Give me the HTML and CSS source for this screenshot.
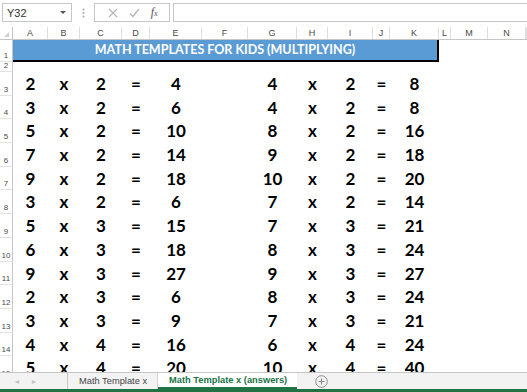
FILE: index.html
```html
<!DOCTYPE html>
<html>
	<head>
		<meta charset="utf-8">
		<link rel="stylesheet" href="styles.css">
	</head>
	<body>
		<div id="formulaBar">
			<div class="nameBox">Y32<span class="dropArrow"></span></div>
			<div class="grip">
				<svg width="3" height="10" viewBox="0 0 3 10"><circle cx="1.5" cy="1.5" r="1" fill="#a6a6a6"/><circle cx="1.5" cy="5" r="1" fill="#a6a6a6"/><circle cx="1.5" cy="8.5" r="1" fill="#a6a6a6"/></svg>
			</div>
			<div class="fxButtons">
				<svg width="10" height="10" viewBox="0 0 10 10"><path d="M1 1 L9 9 M9 1 L1 9" stroke="#b4b4b4" stroke-width="1.2" fill="none"/></svg>
				<svg width="11" height="10" viewBox="0 0 11 10"><path d="M1 5.5 L4 8.5 L10 1" stroke="#b4b4b4" stroke-width="1.3" fill="none"/></svg>
				<span class="fx">f<small>x</small></span>
			</div>
			<div class="formulaInput"></div>
		</div>

		<div id="sheet">
			<div class="row colHeaders">
				<div class="corner"><span class="cornerMark"></span></div>
				<div class="colHead">A</div>
				<div class="colHead">B</div>
				<div class="colHead">C</div>
				<div class="colHead">D</div>
				<div class="colHead">E</div>
				<div class="colHead">F</div>
				<div class="colHead">G</div>
				<div class="colHead">H</div>
				<div class="colHead">I</div>
				<div class="colHead">J</div>
				<div class="colHead">K</div>
				<div class="colHead">L</div>
				<div class="colHead">M</div>
				<div class="colHead">N</div>
				<div class="colHead"></div>
			</div>
			<div class="row titleRow">
				<div class="rowHead">1</div>
				<div class="title">MATH TEMPLATES FOR KIDS (MULTIPLYING)</div>
			</div>
			<div class="row spacerRow">
				<div class="rowHead">2</div>
			</div>
			<div id="rows"></div>
		</div>

		<div id="tabBar">
			<div class="tabNav">
				<span class="navArrow">&#9666;</span>
				<span class="navArrow">&#9656;</span>
			</div>
			<div class="tab">Math Template x</div>
			<div class="tab activeTab">Math Template x (answers)</div>
			<div class="addSheet">
				<svg width="13" height="13" viewBox="0 0 13 13"><circle cx="6.5" cy="6.5" r="5.8" stroke="#8a8a8a" stroke-width="1" fill="none"/><path d="M6.5 3.5 V9.5 M3.5 6.5 H9.5" stroke="#8a8a8a" stroke-width="1.1"/></svg>
			</div>
		</div>
		<div id="statusStrip"></div>

		<script type="text/javascript">
			// left block: a x b = c, right block: d x e = f
			var data = [
				[2,2,4, 4,2,8],
				[3,2,6, 4,2,8],
				[5,2,10, 8,2,16],
				[7,2,14, 9,2,18],
				[9,2,18, 10,2,20],
				[3,2,6, 7,2,14],
				[5,3,15, 7,3,21],
				[6,3,18, 8,3,24],
				[9,3,27, 9,3,27],
				[2,3,6, 8,3,24],
				[3,3,9, 7,3,21],
				[4,4,16, 6,4,24],
				[5,4,20, 10,4,40]
			];

			var holder = document.getElementById('rows');
			for(var i=0;i<data.length;i++){
				var d = data[i];
				var cells = [i+3, d[0], 'x', d[1], '=', d[2], '', d[3], 'x', d[4], '=', d[5], '', '', '', ''];
				var row = document.createElement('div');
				row.className = 'row dataRow';
				for(var n=0;n<cells.length;n++){
					var cell = document.createElement('div');
					cell.className = n==0 ? 'rowHead' : 'cell';
					cell.textContent = cells[n];
					row.appendChild(cell);
				}
				holder.appendChild(row);
			}
		</script>
	</body>
</html>
```

FILE: styles.css
```css
html, body{
	margin:0px;
	padding:0px;
}
body{
	width:527px;
	height:392px;
	overflow:hidden;
	background-color:#ffffff;
	font-family:"Liberation Sans", Arial, sans-serif;
	--cols:13px 35px 32px 42px 28px 52px 46px 49px 31px 45px 17px 49px 12px 37px 38px 1fr;
}

/* formula bar */
#formulaBar{
	height:27px;
	display:flex;
	align-items:flex-start;
	padding-top:3px;
	box-sizing:border-box;
}
.nameBox{
	margin-left:2px;
	width:70px;
	height:19px;
	border:solid 1px #c6c6c6;
	box-sizing:border-box;
	display:flex;
	align-items:center;
	justify-content:space-between;
	padding:0px 5px 0px 4px;
	font-size:11px;
	color:#333333;
}
.dropArrow{
	width:0px;
	height:0px;
	border-left:3px solid transparent;
	border-right:3px solid transparent;
	border-top:3px solid #555555;
}
.grip{
	width:22px;
	height:19px;
	display:flex;
	align-items:center;
	justify-content:center;
}
.fxButtons{
	width:76px;
	height:19px;
	border:solid 1px #c6c6c6;
	box-sizing:border-box;
	display:flex;
	align-items:center;
	justify-content:space-around;
	padding:0px 6px 0px 8px;
}
.fx{
	font-family:"Liberation Serif", serif;
	font-style:italic;
	font-size:12px;
	color:#555555;
}
.fx small{
	font-size:8px;
}
.formulaInput{
	flex:1;
	margin-left:3px;
	height:19px;
	border:solid 1px #c6c6c6;
	border-right:none;
	box-sizing:border-box;
}

/* sheet grid */
#sheet{
	height:345px;
	overflow:hidden;
}
.row{
	display:grid;
	grid-template-columns:var(--cols);
}
.colHeaders{
	height:13px;
	border-bottom:solid 1px #c6c6c6;
	box-sizing:border-box;
}
.corner{
	border-right:solid 1px #c6c6c6;
	position:relative;
}
.cornerMark{
	position:absolute;
	right:3px;
	bottom:2px;
	width:0px;
	height:0px;
	border-left:5px solid transparent;
	border-bottom:5px solid #cfcfcf;
}
.colHead{
	border-right:solid 1px #dedede;
	font-size:9px;
	line-height:12px;
	text-align:center;
	color:#4a4a4a;
}
.rowHead{
	border-right:solid 1px #c6c6c6;
	border-bottom:solid 1px #e2e2e2;
	box-sizing:border-box;
	font-size:8px;
	color:#4a4a4a;
	display:flex;
	align-items:flex-end;
	justify-content:center;
	padding-bottom:1px;
}
.titleRow{
	height:20px;
}
.title{
	grid-column:2 / 13;
	background-color:#5b9bd5;
	border-bottom:solid 2px #000000;
	border-right:solid 2px #000000;
	box-sizing:border-box;
	color:#ffffff;
	font-family:Lato, "Open Sans", sans-serif;
	font-weight:700;
	font-size:12.5px;
	line-height:20px;
	text-align:center;
}
.spacerRow{
	height:12px;
}
.dataRow{
	height:23.7px;
}
.cell{
	font-family:Lato, "Open Sans", sans-serif;
	font-weight:700;
	font-size:17px;
	line-height:23px;
	text-align:center;
	color:#000000;
}

/* sheet tabs */
#tabBar{
	height:17px;
	background-color:#f3f3f3;
	border-top:solid 1px #c6c6c6;
	box-sizing:border-box;
	display:flex;
	align-items:stretch;
	font-size:9.3px;
}
.tabNav{
	width:68px;
	border-right:solid 1px #c6c6c6;
	box-sizing:border-box;
	display:flex;
	align-items:center;
	padding-left:15px;
	gap:13px;
	color:#c3c3c3;
	font-size:8px;
}
.tab{
	padding:0px 10px 0px 11px;
	display:flex;
	align-items:center;
	color:#444444;
	border-right:solid 1px #d0d0d0;
}
.activeTab{
	background-color:#ffffff;
	color:#217346;
	font-weight:bold;
	border-right:none;
	border-bottom:solid 2px #217346;
}
.addSheet{
	display:flex;
	align-items:center;
	margin-left:18px;
}
#statusStrip{
	height:3px;
	background-color:#217346;
}
```
